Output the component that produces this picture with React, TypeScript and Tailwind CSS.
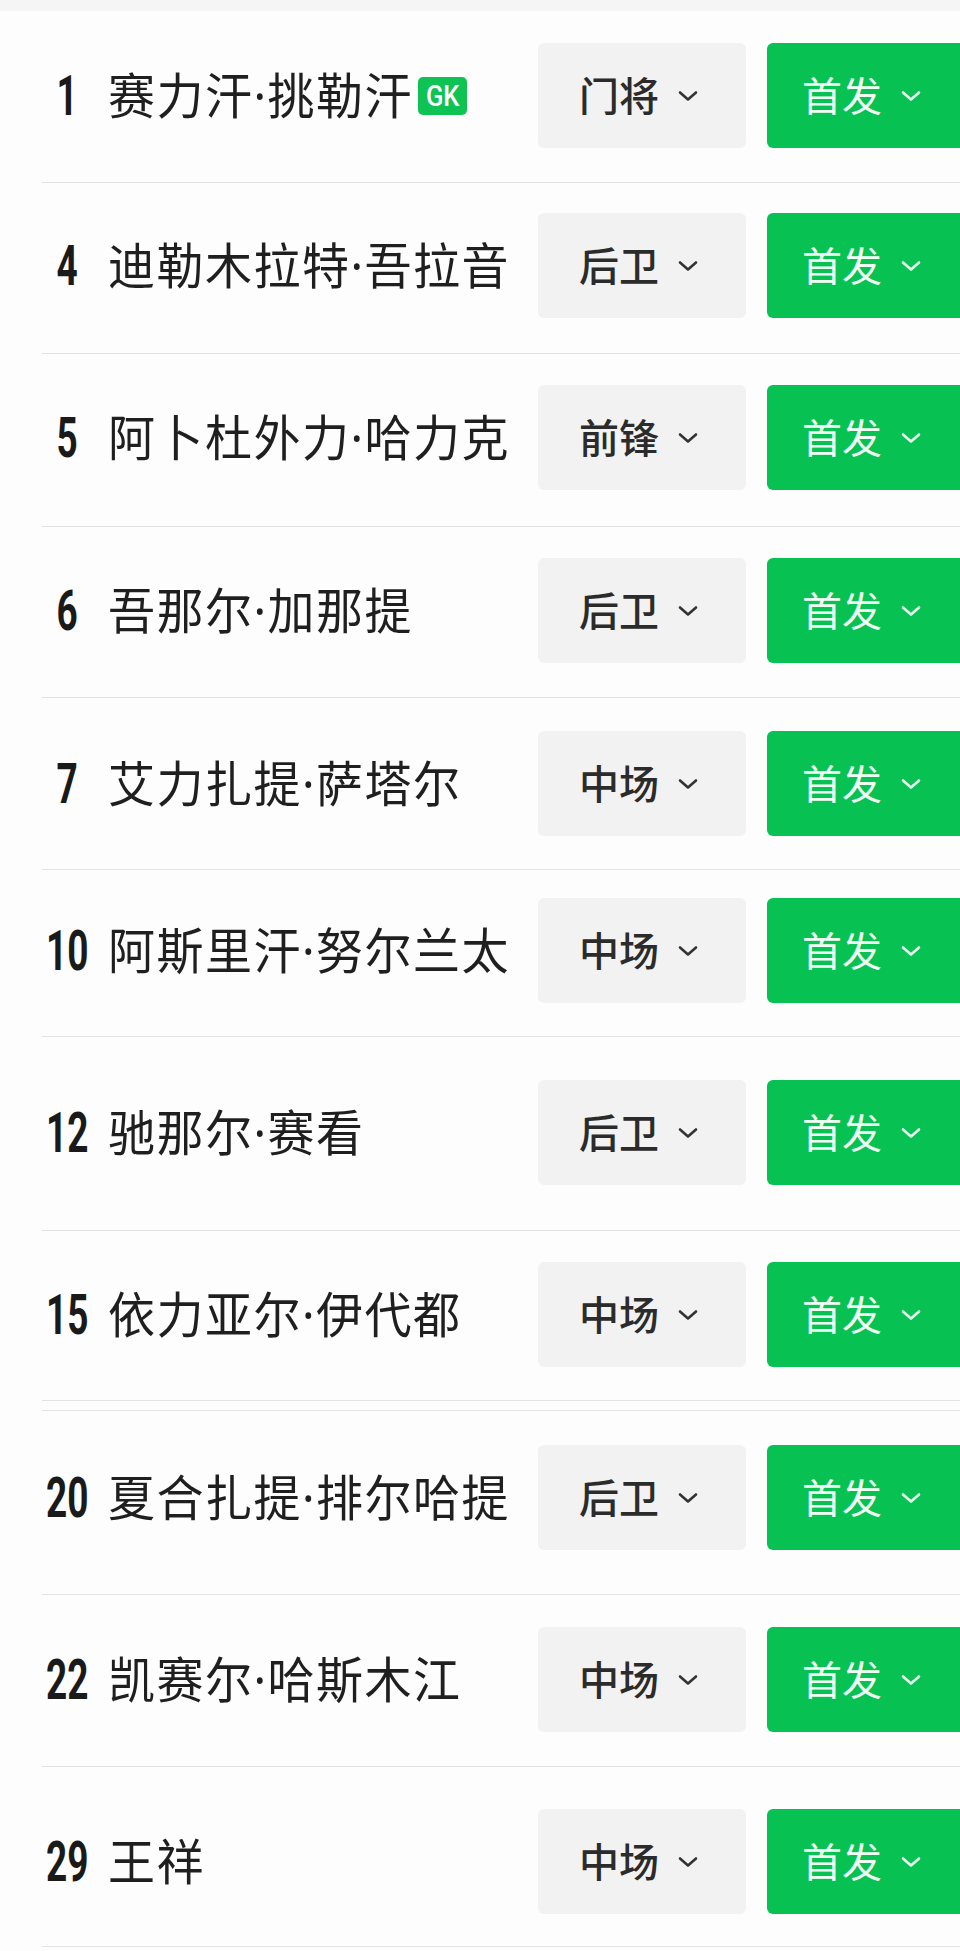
import React from "react";

type Player = {
  no: number;
  name: string;
  pos: string;
  gk?: boolean;
  pad: string;
  extraLine?: boolean;
};

const players: Player[] = [
  { no: 1, name: "赛力汗·挑勒汗", pos: "门将", gk: true, pad: "pt-[32px] pb-[34px]" },
  { no: 4, name: "迪勒木拉特·吾拉音", pos: "后卫", pad: "pt-[30px] pb-[35px]" },
  { no: 5, name: "阿卜杜外力·哈力克", pos: "前锋", pad: "pt-[31px] pb-[36px]" },
  { no: 6, name: "吾那尔·加那提", pos: "后卫", pad: "pt-[31px] pb-[34px]" },
  { no: 7, name: "艾力扎提·萨塔尔", pos: "中场", pad: "pt-[33px] pb-[33px]" },
  { no: 10, name: "阿斯里汗·努尔兰太", pos: "中场", pad: "pt-[28px] pb-[33px]" },
  { no: 12, name: "驰那尔·赛看", pos: "后卫", pad: "pt-[43px] pb-[45px]" },
  { no: 15, name: "依力亚尔·伊代都", pos: "中场", pad: "pt-[31px] pb-[33px]", extraLine: true },
  { no: 20, name: "夏合扎提·排尔哈提", pos: "后卫", pad: "pt-[34px] pb-[44px]" },
  { no: 22, name: "凯赛尔·哈斯木江", pos: "中场", pad: "pt-[32px] pb-[34px]" },
  { no: 29, name: "王祥", pos: "中场", pad: "pt-[42px] pb-[32px]" },
];

function Chevron({ color }: { color: string }) {
  return (
    <svg width="22" height="12" viewBox="0 0 22 12" className="shrink-0">
      <polyline
        points="3,2.5 11,9.5 19,2.5"
        fill="none"
        stroke={color}
        strokeWidth="2.6"
        strokeLinecap="round"
        strokeLinejoin="round"
      />
    </svg>
  );
}

export default function App() {
  return (
    <div
      className="w-[960px] min-h-[1951px] overflow-hidden bg-[#fdfdfd]"
      style={{ fontFamily: '"Noto Sans", "Noto Sans CJK SC", sans-serif' }}
    >
      <div className="h-[11px] bg-[#f5f5f5]" />

      {players.map((p) => (
        <div key={p.no}>
          <div className={`ml-[42px] border-b border-[#e3e3e3] flex items-center ${p.pad}`}>
            <div className="w-[50px] shrink-0 h-[105px] flex items-center justify-center">
              <span className="inline-block scale-x-[0.66] font-['Roboto'] font-bold text-[56px] leading-none text-[#1a1a1a]">
                {p.no}
              </span>
            </div>
            <div className="w-[446px] shrink-0 pl-[16px] flex items-center">
              <span className="inline-block scale-y-[1.05] text-[47px] tracking-[1.5px] leading-none text-[#1f1f1f] whitespace-nowrap">
                {p.name}
              </span>
              {p.gk && (
                <span className="ml-[5px] w-[49px] h-[38px] rounded-[5px] bg-[#0fc254] flex items-center justify-center">
                  <span className="inline-block scale-x-[0.85] font-['Roboto'] font-medium text-[30px] leading-none text-white">
                    GK
                  </span>
                </span>
              )}
            </div>
            <div className="w-[208px] h-[105px] shrink-0 rounded-[6px] bg-[#f2f2f2] flex items-center pl-[41px] gap-[18px]">
              <span className="text-[40px] font-medium leading-none text-[#2b2b2b]">{p.pos}</span>
              <Chevron color="#333333" />
            </div>
            <div className="ml-[21px] w-[230px] h-[105px] shrink-0 rounded-[6px] bg-[#07c252] flex items-center pl-[35px] gap-[18px]">
              <span className="text-[40px] leading-none text-[#effff3]">首发</span>
              <Chevron color="#e8fff0" />
            </div>
          </div>
          {p.extraLine && <div className="ml-[42px] mt-[9px] border-b border-[#e3e3e3]" />}
        </div>
      ))}
    </div>
  );
}
